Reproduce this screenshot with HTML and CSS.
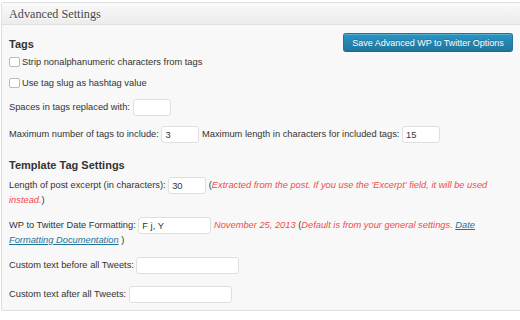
FILE: index.html
```html
<!DOCTYPE html>
<html lang="en">

<head>
    <meta charset="UTF-8" />
    <meta name="viewport" content="width=device-width, initial-scale=1.0" />
    <link rel="stylesheet" href="styles.css">
    <title>Advanced Settings</title>
</head>

<body>
    <div class="postbox">
        <h3 class="hndle">Advanced Settings</h3>
        <div class="inside">
            <div class="tags-head">
                <h4>Tags</h4>
                <button class="button-primary">Save Advanced WP to Twitter Options</button>
            </div>
            <p class="check check-first"><input type="checkbox" id="strip"><label for="strip">Strip nonalphanumeric characters from tags</label></p>
            <p class="check"><input type="checkbox" id="slug"><label for="slug">Use tag slug as hashtag value</label></p>
            <p class="row row-spaces"><label for="spaces">Spaces in tags replaced with:</label> <input type="text" id="spaces" class="small-text"></p>
            <p class="row"><label for="maxtags">Maximum number of tags to include:</label> <input type="text" id="maxtags" class="small-text" value="3"> <label for="maxlen">Maximum length in characters for included tags:</label> <input type="text" id="maxlen" class="small-text" value="15"></p>
            <h4 class="sub-head">Template Tag Settings</h4>
            <p class="row row-first"><label for="excerpt">Length of post excerpt (in characters):</label> <input type="text" id="excerpt" class="small-text" value="30"> (<em>Extracted from the post. If you use the 'Excerpt' field, it will be used instead.</em>)</p>
            <p class="row"><label for="datef">WP to Twitter Date Formatting:</label> <input type="text" id="datef" class="date-text" value="F j, Y"> <em>November 25, 2013</em> (<em>Default is from your general settings. <a href="#">Date Formatting Documentation</a></em> )</p>
            <p class="row"><label for="prepend">Custom text before all Tweets:</label> <input type="text" id="prepend" class="wide-text"></p>
            <p class="row row-last"><label for="append">Custom text after all Tweets:</label> <input type="text" id="append" class="wide-text"></p>
        </div>
    </div>
</body>

</html>
```

FILE: styles.css
```css
* {
    margin: 0;
    padding: 0;
    box-sizing: border-box;
}

body {
    background-color: #fff;
    font-family: "Liberation Sans", Arial, sans-serif;
    font-size: 9.3px;
    color: #333;
    padding-top: 2px;
}

.postbox {
    margin-left: 1px;
    border: 1px solid #dfdfdf;
    border-right: none;
    border-radius: 3px 0 0 3px;
    background-color: #f8f8f8;
}

.hndle {
    height: 22px;
    padding: 0 7px;
    font-family: "Liberation Serif", Georgia, serif;
    font-size: 12.2px;
    font-weight: normal;
    line-height: 22px;
    color: #464646;
    text-shadow: #fff 0 1px 0;
    background: linear-gradient(#f9f9f9, #ececec);
    border-bottom: 1px solid #dfdfdf;
}

.inside {
    padding: 8px 7px 7px;
}

h4 {
    font-size: 11px;
    font-weight: bold;
    line-height: 14px;
    color: #333;
}

.tags-head {
    display: flex;
    justify-content: space-between;
    align-items: center;
    height: 19px;
}

.tags-head h4 {
    margin-top: 3px;
}

.button-primary {
    width: 170px;
    height: 19px;
    font-family: "Liberation Sans", Arial, sans-serif;
    font-size: 9px;
    color: #fff;
    text-shadow: rgba(0, 0, 0, 0.15) 0 -1px 0;
    background: linear-gradient(#2a95c5, #21759b);
    border: 1px solid #21759b;
    border-bottom-color: #1e6a8d;
    border-radius: 3px;
    box-shadow: inset 0 1px 0 rgba(120, 200, 230, 0.5);
    cursor: pointer;
}

.check {
    display: flex;
    align-items: center;
    height: 13px;
    margin-top: 8px;
}

.check-first {
    margin-top: 3px;
}

.check input {
    appearance: none;
    width: 11px;
    height: 10px;
    margin-right: 2px;
    background-color: #fff;
    border: 1px solid #bbb;
    border-radius: 2px;
}

.row {
    line-height: 13px;
    margin-top: 10px;
}

.row-spaces {
    margin-top: 10px;
}

.sub-head {
    margin-top: 15px;
}

.row-first {
    margin-top: 5px;
}

.row-last {
    margin-top: 12px;
}

.row input {
    height: 17px;
    padding: 0 3px;
    vertical-align: middle;
    font-family: "Liberation Sans", Arial, sans-serif;
    font-size: 9.3px;
    color: #333;
    background-color: #fff;
    border: 1px solid #dfdfdf;
    border-radius: 3px;
}

.small-text {
    width: 38px;
}

.date-text {
    width: 73px;
}

.wide-text {
    width: 103px;
}

em {
    color: #f24b4b;
}

a {
    color: #21759b;
}
```
